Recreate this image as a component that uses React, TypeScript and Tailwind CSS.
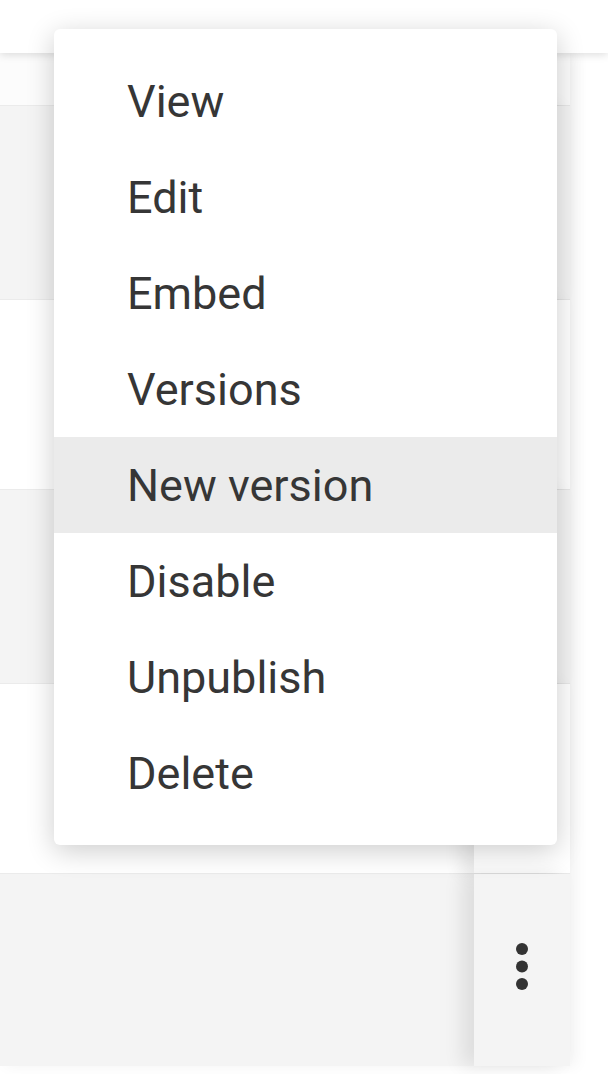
import { useState } from 'react';

const items = ['View', 'Edit', 'Embed', 'Versions', 'New version', 'Disable', 'Unpublish', 'Delete'];

const rows = [
  { h: 'h-[52px]', bg: 'bg-[#fcfcfc]', dots: false },
  { h: 'h-[194px]', bg: 'bg-[#f4f4f4]', dots: false },
  { h: 'h-[190px]', bg: 'bg-white', dots: false },
  { h: 'h-[194px]', bg: 'bg-[#f4f4f4]', dots: false },
  { h: 'h-[190px]', bg: 'bg-white', dots: false },
  { h: 'h-[193px]', bg: 'bg-[#f4f4f4]', dots: true },
];

function MoreVert() {
  return (
    <svg width="14" height="50" viewBox="0 0 14 50" aria-hidden="true">
      <circle cx="7" cy="7" r="6" fill="#333" />
      <circle cx="7" cy="24.5" r="6" fill="#333" />
      <circle cx="7" cy="42" r="6" fill="#333" />
    </svg>
  );
}

export default function App() {
  const [active] = useState(4);

  return (
    <div className="relative w-[608px] h-[1074px] overflow-hidden bg-white font-['Roboto',sans-serif]">
      {/* top bar */}
      <div className="relative z-10 h-[53px] bg-white shadow-[0_2px_8px_rgba(0,0,0,0.13)]" />

      {/* table */}
      <div className="w-[570px] shadow-[6px_0_14px_rgba(0,0,0,0.05)]">
        {rows.map((r, i) => (
          <div key={i} className={`flex ${r.h} ${r.bg} ${i > 0 ? 'border-t border-[#ebebeb]' : ''}`}>
            <div className="flex-1" />
            <div
              className={`w-[96px] flex items-center justify-center pb-[6px] ${r.bg} shadow-[-12px_0_18px_rgba(0,0,0,0.09)]`}
            >
              {r.dots && <MoreVert />}
            </div>
          </div>
        ))}
      </div>

      {/* action menu */}
      <div className="absolute left-[54px] top-[29px] z-20 w-[503px] rounded-[6px] bg-white py-[24px] shadow-[0_6px_28px_rgba(0,0,0,0.2)]">
        {items.map((label, i) => (
          <div
            key={label}
            className={`h-[96px] pt-[2px] pl-[73px] text-[45px] leading-[94px] text-[#363636] ${
              i === active ? 'bg-[#ebebeb]' : ''
            }`}
          >
            {label}
          </div>
        ))}
      </div>
    </div>
  );
}
